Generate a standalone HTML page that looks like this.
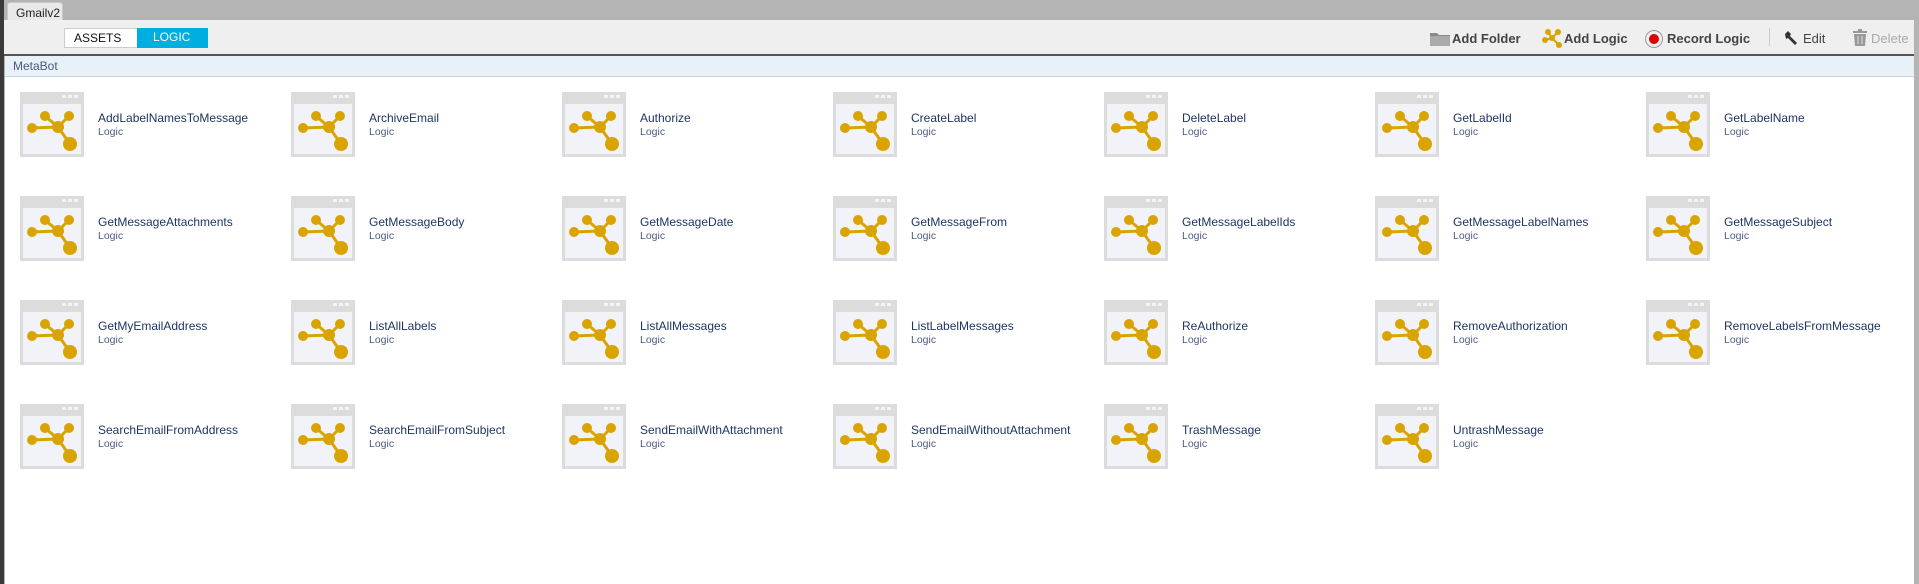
<!DOCTYPE html>
<html><head><meta charset="utf-8"><style>
*{margin:0;padding:0;box-sizing:border-box}
body{width:1919px;height:584px;overflow:hidden;background:#b4b4b4;font-family:"Liberation Sans",sans-serif;position:relative}
.lb{position:absolute;left:0;top:0;width:4px;height:584px;background:#3a3a3a}
.tab{position:absolute;left:7px;top:2px;width:56px;height:19px;background:#e9e9e9;border:1px solid #c8c8c8;border-bottom:none;border-radius:3px 3px 0 0;font-size:12px;color:#222;padding:3px 0 0 8px}
.tb{position:absolute;left:4px;top:20px;width:1910px;height:36px;background:#efefef;border-bottom:2px solid #555}
.tg{position:absolute;top:8px;height:20px;font-size:12px;line-height:19px}
.main{position:absolute;left:5px;top:56px;width:1909px;height:528px;background:#fff}
.mb{height:21px;background:#e8f0f8;border-bottom:1px solid #c9d5e2;font-size:12px;color:#4a5a7a;padding:3px 0 0 8px}
.it{position:absolute;width:260px;height:66px}
.ic{position:absolute;left:0;top:0;width:64px;height:65px}
.nm{position:absolute;left:78px;top:19px;font-size:12px;color:#1f3563;white-space:nowrap}
.lg{position:absolute;left:78px;top:34px;font-size:10.5px;color:#4e5d85}
.tl{position:absolute;top:11px;font-size:13px;font-weight:bold;color:#444;white-space:nowrap}
</style></head><body>
<svg width="0" height="0" style="position:absolute"><defs><g id="g">
<rect width="64" height="65" fill="#dcdcdc"/>
<rect x="42" y="3" width="4" height="3" fill="#f4f4f4"/><rect x="48" y="3" width="4" height="3" fill="#f4f4f4"/><rect x="54" y="3" width="4" height="3" fill="#f4f4f4"/>
<rect x="3" y="12" width="58" height="50" fill="#f2f3f8"/>
<g stroke="#d9a300" stroke-width="3"><line x1="12" y1="36" x2="38" y2="35"/><line x1="25" y1="24" x2="38" y2="35"/><line x1="49" y1="24" x2="38" y2="35"/><line x1="50" y1="52" x2="38" y2="35"/></g>
<g fill="#d9a300"><circle cx="12" cy="36" r="5"/><circle cx="25" cy="24" r="5"/><circle cx="49" cy="24" r="5"/><circle cx="38" cy="35" r="6"/><circle cx="50" cy="52" r="7"/></g>
</g></defs></svg>
<div class="lb"></div>
<div class="tab">Gmailv2</div>
<div class="tb">
<div class="tg" style="left:60px;width:74px;background:#fff;border:1px solid #ccc;padding-left:9px;color:#111">ASSETS</div>
<div class="tg" style="left:133px;width:71px;background:#00aee0;color:#fff;padding-left:16px">LOGIC</div>
<svg style="position:absolute;left:1425px;top:11px" width="22" height="16"><path d="M1 2h7l2 2h11v11H1z" fill="#888"/><rect x="1" y="5" width="20" height="10" fill="#aaa"/></svg>
<div class="tl" style="left:1448px">Add Folder</div>
<svg style="position:absolute;left:1537px;top:8px" width="22" height="20"><g stroke="#d9a300" stroke-width="2"><line x1="4" y1="12" x2="11" y2="10"/><line x1="7" y1="4" x2="11" y2="10"/><line x1="17" y1="4" x2="11" y2="10"/><line x1="18" y1="17" x2="11" y2="10"/></g><g fill="#d9a300"><circle cx="4" cy="12" r="3"/><circle cx="7" cy="4" r="3"/><circle cx="17" cy="4" r="3"/><circle cx="11" cy="10" r="3"/><circle cx="18" cy="17" r="3"/></g></svg>
<div class="tl" style="left:1560px">Add Logic</div>
<svg style="position:absolute;left:1640px;top:9px" width="20" height="20"><circle cx="10" cy="10" r="8.5" fill="#eee" stroke="#999"/><circle cx="10" cy="10" r="5" fill="#d00"/></svg>
<div class="tl" style="left:1663px">Record Logic</div>
<div style="position:absolute;left:1765px;top:8px;width:1px;height:18px;background:#ccc"></div>
<svg style="position:absolute;left:1779px;top:10px" width="16" height="16"><path d="M2 4l3-3 3 3-1 2 7 7-2 2-7-7-2 1z" fill="#333"/></svg>
<div class="tl" style="left:1799px;font-weight:normal">Edit</div>
<svg style="position:absolute;left:1849px;top:9px" width="14" height="18"><rect x="0" y="2" width="14" height="2" fill="#999"/><rect x="5" y="0" width="4" height="2" fill="#999"/><path d="M1 5h12l-1 12H2z" fill="#999"/><g stroke="#ddd"><line x1="5" y1="7" x2="5" y2="15"/><line x1="9" y1="7" x2="9" y2="15"/></g></svg>
<div class="tl" style="left:1867px;font-weight:normal;color:#aaa">Delete</div>
</div>
<div class="main"><div class="mb">MetaBot</div></div>
<div id="items"></div>
<script>
var n=["AddLabelNamesToMessage","ArchiveEmail","Authorize","CreateLabel","DeleteLabel","GetLabelId","GetLabelName","GetMessageAttachments","GetMessageBody","GetMessageDate","GetMessageFrom","GetMessageLabelIds","GetMessageLabelNames","GetMessageSubject","GetMyEmailAddress","ListAllLabels","ListAllMessages","ListLabelMessages","ReAuthorize","RemoveAuthorization","RemoveLabelsFromMessage","SearchEmailFromAddress","SearchEmailFromSubject","SendEmailWithAttachment","SendEmailWithoutAttachment","TrashMessage","UntrashMessage"];
var xs=[20,291,562,833,1104,1375,1646],h="";
n.forEach(function(s,i){var x=xs[i%7],y=92+104*Math.floor(i/7);
h+='<div class="it" style="left:'+x+'px;top:'+y+'px"><svg class="ic" width="64" height="65"><use href="#g"/></svg><div class="nm">'+s+'</div><div class="lg">Logic</div></div>';});
document.getElementById("items").innerHTML=h;
</script>
</body></html>
